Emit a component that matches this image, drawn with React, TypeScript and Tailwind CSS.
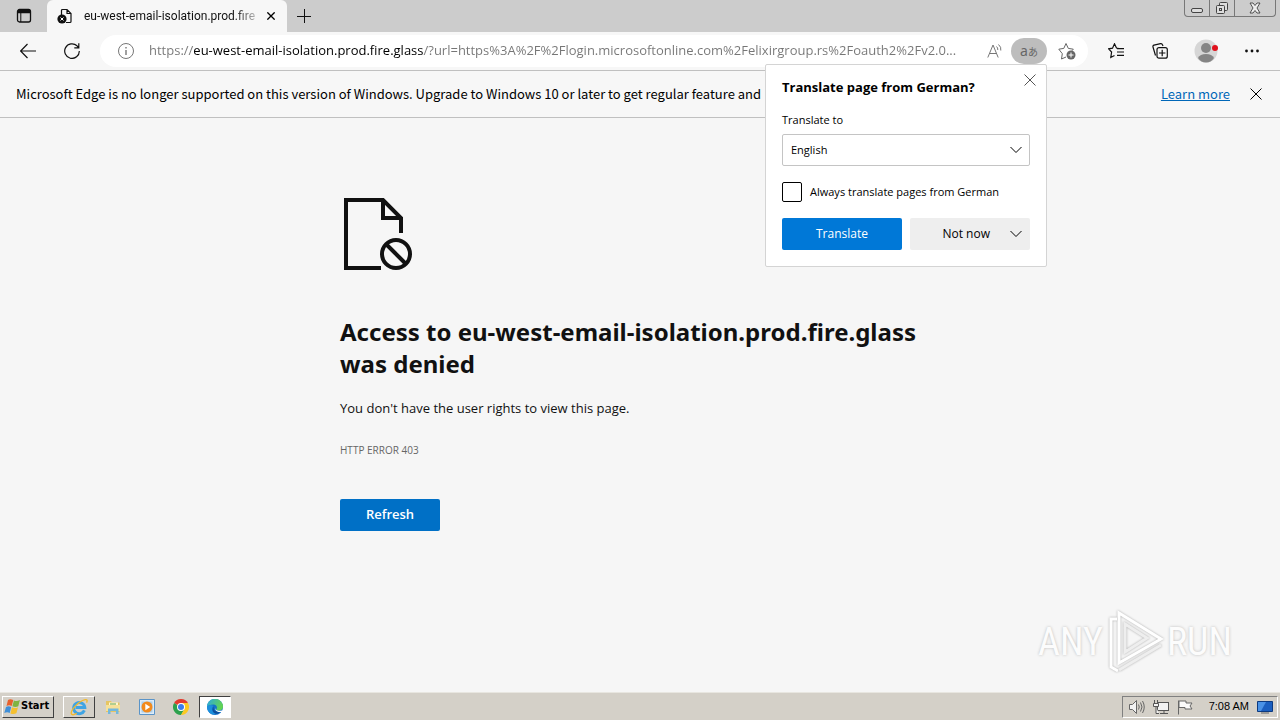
import { ReactNode, useState } from 'react';

type IconProps = { className?: string };

type IconButtonProps = {
  label: string;
  className?: string;
  children: ReactNode;
};

const IconButton = ({ label, className = '', children }: IconButtonProps) => (
  <button
    type="button"
    aria-label={label}
    className={`flex shrink-0 items-center justify-center ${className}`}
  >
    {children}
  </button>
);

const CloseIcon = ({ className = 'size-3' }: IconProps) => (
  <svg className={className} viewBox="0 0 12 12" fill="none" stroke="currentColor">
    <path d="M.5.5l11 11M11.5.5l-11 11" />
  </svg>
);

const ChevronIcon = ({ className = '' }: IconProps) => (
  <svg className={className} viewBox="0 0 12 8" fill="none" stroke="currentColor">
    <path d="M.5 1l5.500 5.500L11.500 1" />
  </svg>
);

const StartFlag = () => (
  <svg className="h-4 w-4" viewBox="0 0 16 16">
    <path d="M4 1c1.500-1 3-1 5.300 0L7.700 7c-2-1-3.700-.7-5.200 0z" fill="#e8612c" />
    <path d="M9.900 1.400c2 .9 3.700.8 6-.3L14.300 7.200c-2 1.100-3.900 1-5.900.1z" fill="#7fb441" />
    <path d="M2 8c1.600-.8 3.200-.9 5.200 0L5.700 14c-2-1-3.700-.7-5.400.1z" fill="#3f8fd8" />
    <path d="M8 8.300c2 1 3.900 1 6-.1L12.400 14.300c-2 1.100-3.900 1-6 .1z" fill="#f5c02f" />
  </svg>
);

const ExplorerEIcon = () => (
  <svg className="size-[18px]" viewBox="0 0 16 16" fill="none">
    <path d="M12.800 11A5 5 0 1 1 13.200 8.500H5" stroke="#3fa4e4" strokeWidth="2.600" />
    <path d="M1.500 14.500C-.5 12 7 3 13.500 1.500c2-.4 2 1 1.200 2.600M1.500 14.500c1 .8 3 0 4.500-1" stroke="#f2b92c" strokeWidth="1.200" />
  </svg>
);

const FolderIcon = () => (
  <svg className="size-4" viewBox="0 0 16 16">
    <path d="M1 2h5l1 1.500h7.500V13H1z" fill="#e6c562" />
    <path d="M4 3.500h9v3H4z" fill="#fff6d0" />
    <path d="M5 4.500h6v1H5z" fill="#62a64e" />
    <path d="M1 6h14v6H1z" fill="#f6e199" />
    <path d="M3 9.500h10.500V15H11v-3H5.500v3H3z" fill="#74b8dc" />
  </svg>
);

const MediaIcon = () => (
  <svg className="size-4" viewBox="0 0 16 16">
    <path d="M.5.500h15v15H.500z" fill="#dcebf8" stroke="#5a94c8" />
    <path d="M2.500 2.500h11v11h-11z" fill="#a9cdea" />
    <circle cx="8" cy="8" r="5.500" fill="#f28a1c" />
    <path d="M6.300 4.800L11.200 8l-4.900 3.200z" fill="#fff" />
  </svg>
);

const ChromeIcon = () => (
  <svg className="size-4" viewBox="0 0 16 16">
    <path d="M8 8L1.070 4A8 8 0 0 1 14.930 4z" fill="#e33b2e" />
    <path d="M8 8h-.5L1.070 4A8 8 0 0 0 8 16l3.500-6z" fill="#2da14d" />
    <path d="M8 8V4h6.930A8 8 0 0 1 8 16l3.460-6z" fill="#fcc921" />
    <circle cx="8" cy="8" r="4" fill="#fff" />
    <circle cx="8" cy="8" r="3" fill="#3b7ded" />
  </svg>
);

const EdgeIcon = () => (
  <svg className="size-4" viewBox="0 0 16 16">
    <defs>
      <linearGradient id="edge-top" x1="0" y1="0" x2="1" y2=".3">
        <stop offset="0" stopColor="#2aa8e2" />
        <stop offset="1" stopColor="#62d453" />
      </linearGradient>
    </defs>
    <circle cx="8" cy="8" r="8" fill="#1271c9" />
    <path d="M0 8A8 8 0 0 1 16 7.500c0 3-2.300 4-4.300 4-1.800 0-2.700-.8-2.200-1.500 1.200-1.800 0-4.500-3-4.500C3.500 5.500.500 6.500 0 8z" fill="url(#edge-top)" />
    <path d="M6.500 7C4 8.500 4.300 13 9 14.800 5.500 17 0 13.500 0 8c1-2 4-3 6.500-1z" fill="#1c8fdc" />
    <path d="M7 7.500c-1.500 3 1 6 6.500 5-1.500 2-3 2.500-4.500 2.300C5 13.500 4.800 9.500 7 7.500z" fill="#0d4f9c" />
    <path d="M8.500 8.500c-.6 2 1.700 4 5.800 2.900l1.700.6V13l-2 0C10.500 13.500 7.500 11.500 8.500 8.500z" fill="#fff" />
  </svg>
);

const TabStrip = () => (
  <div className="flex h-8 items-start bg-[#cccccc]">
    <IconButton label="Tab actions" className="h-8 w-[47px] rounded-br-md">
      <svg className="size-4" viewBox="0 0 16 16" fill="none" stroke="#111">
        <rect x="1.500" y="1.500" width="13" height="12.500" rx="2" strokeWidth="1.300" />
        <path d="M2 3.500h12" strokeWidth="3.500" />
        <path d="M4.800 4v10" />
      </svg>
    </IconButton>
    <div className="flex h-8 w-60 items-center rounded-t-md bg-[#f7f7f7] pl-2.5">
      <svg className="mr-[11px] size-4 shrink-0" viewBox="0 0 16 16" fill="none" stroke="#111">
        <path d="M4.500 7V2.500q0-1 1-1H10L14 5.500V13.500q0 1-1 1H9M10 1.500V5.500h4" strokeWidth="1.200" />
        <circle cx="5" cy="11" r="4.600" fill="#111" stroke="none" />
        <path d="M3.500 9.500l3 3M6.500 9.500l-3 3" stroke="#fff" />
      </svg>
      <span className="w-[175px] whitespace-nowrap bg-[linear-gradient(to_right,#111_150px,#cccccc_174px)] bg-clip-text font-['Roboto',sans-serif] text-xs text-transparent">
        eu-west-email-isolation.prod.fire
      </span>
      <IconButton label="Close tab" className="size-6">
        <CloseIcon className="size-2 stroke-2" />
      </IconButton>
    </div>
    <IconButton label="New tab" className="h-8 w-[34px]">
      <svg className="size-4" viewBox="0 0 16 16" stroke="#111">
        <path d="M1 8.500h14M8.500 1v14" />
      </svg>
    </IconButton>
    <div className="mr-1 ml-auto flex h-[17px] rounded-b border border-t-0 border-[#777] text-[#444]">
      <IconButton label="Minimize" className="w-[25px] border-r border-[#777]">
        <svg className="h-3 w-3" viewBox="0 0 12 12" fill="#ddd" stroke="currentColor">
          <rect x=".5" y="6.500" width="11" height="4" rx="1.500" />
        </svg>
      </IconButton>
      <IconButton label="Restore" className="w-[25px] border-r border-[#777]">
        <svg className="size-3" viewBox="0 0 12 12" fill="#ddd" stroke="currentColor">
          <rect x="3.500" y=".5" width="8" height="8" rx="1" />
          <rect x=".5" y="3.500" width="8" height="8" rx="1" />
          <rect x="3.500" y="6.500" width="2" height="2" />
        </svg>
      </IconButton>
      <IconButton label="Close window" className="w-10">
        <svg className="h-3 w-3" viewBox="0 0 12 12" fill="#eee" stroke="currentColor">
          <path d="M1 1h3l2 2.500L8 1h3L8 6l3 5H8L6 8.500 4 11H1l3-5z" strokeWidth=".9" />
        </svg>
      </IconButton>
    </div>
  </div>
);

const TranslatePopup = () => {
  const [always, setAlways] = useState(false);

  return (
    <section
      aria-label="Translate page"
      className="absolute top-full right-0 z-10 w-[282px] rounded-xs border border-[#d4d4d4] bg-white px-4 pt-3 pb-4 text-[11px] text-black"
    >
      <IconButton label="Close" className="absolute top-[3px] right-1 size-6 text-[#555]">
        <CloseIcon />
      </IconButton>
      <h2 className="text-[13px] leading-5 font-bold">Translate page from German?</h2>
      <label htmlFor="target" className="mt-[13px] block leading-5">
        Translate to
      </label>
      <div className="relative mt-1">
        <select
          id="target"
          className="h-8 w-full appearance-none rounded-xs border border-[#c4c4c4] bg-white px-2"
        >
          <option>English</option>
        </select>
        <ChevronIcon className="pointer-events-none absolute top-3 right-2 h-2 w-3" />
      </div>
      <div className="mt-4 flex h-5 items-center gap-2">
        <input
          id="always"
          type="checkbox"
          checked={always}
          onChange={(e) => setAlways(e.target.checked)}
          className="size-5 appearance-none rounded-xs border border-black checked:bg-[#0078d7]"
        />
        <label htmlFor="always">Always translate pages from German</label>
      </div>
      <div className="mt-4 grid grid-cols-2 gap-2">
        <button type="button" className="h-8 rounded-xs bg-[#0078d7] text-xs text-white">
          Translate
        </button>
        <button
          type="button"
          className="flex h-8 items-center justify-end gap-5 rounded-xs bg-[#eeeeee] pr-2 text-xs"
        >
          Not now
          <ChevronIcon className="h-2 w-3" />
        </button>
      </div>
    </section>
  );
};

const Toolbar = () => (
  <div className="flex h-[39px] items-center border-b border-[#c0c0c0] bg-[#f7f7f7] pr-3 text-[#111]">
    <IconButton label="Back" className="ml-3 size-8">
      <svg className="size-4" viewBox="0 0 16 16" fill="none" stroke="currentColor" strokeWidth="1.200">
        <path d="M16 8H.8M7.500 1L.6 8l6.900 7" />
      </svg>
    </IconButton>
    <IconButton label="Refresh page" className="ml-3 size-8">
      <svg className="size-4" viewBox="0 0 16 16" fill="none" stroke="currentColor" strokeWidth="1.200">
        <path d="M15.300 8A7.300 7.300 0 1 1 13 2.800L14.500 4.500M14.800.300V4.800H10.300" />
      </svg>
    </IconButton>
    <div className="ml-3 flex h-8 min-w-0 flex-1 items-center rounded-full bg-white pr-[5px]">
      <IconButton label="Site information" className="ml-4 size-5 text-[#777]">
        <svg className="size-4" viewBox="0 0 16 16" fill="none" stroke="currentColor">
          <circle cx="8" cy="8" r="7.500" />
          <path d="M8 7v5M8 4v1.500" strokeWidth="1.400" />
        </svg>
      </IconButton>
      <input
        aria-label="Address"
        readOnly
        value="https://eu-west-email-isolation.prod.fire.glass/?url=https%3A%2F%2Flogin.microsoftonline.com%2Felixirgroup.rs%2Foauth2%2Fv2.0..."
        className="mr-2 ml-[13px] min-w-0 flex-1 bg-[linear-gradient(to_right,#767676_44px,#000_44px,#000_274px,#767676_274px)] bg-clip-text text-[13px] text-transparent outline-none"
      />
      <IconButton label="Read aloud" className="size-8 text-[#777]">
        <svg className="size-4" viewBox="0 0 16 16" fill="none" stroke="currentColor">
          <path d="M.8 14.500L6 2l5.200 12.500M2.600 10.500h6.800M9.500 3.500q1.500 1.200 1.300 3.500M11.500 1.500q3 2.500 2.300 6" />
        </svg>
      </IconButton>
      <div className="relative">
        <IconButton label="Translate this page" className="h-[26px] w-9 rounded-full bg-[#bdbdbd] text-[#666]">
          <span className="font-['Noto_Sans','Noto_Sans_CJK_JP',sans-serif] text-[10px] leading-4">
            <span className="text-sm leading-4">a</span>あ
          </span>
        </IconButton>
        <TranslatePopup />
      </div>
      <IconButton label="Add to favorites" className="ml-1 size-8 text-[#666]">
        <svg className="size-[18px]" viewBox="0 0 18 18" fill="none" stroke="currentColor">
          <path d="M8 15l-4.500 2 .8-5.300L.800 7.200l5-.8L8 1.500l2.300 4.900 5 .8-1.300 1.500" />
          <circle cx="13" cy="13" r="4.500" fill="currentColor" stroke="none" />
          <path d="M10.500 13h5M13 10.500v5" stroke="#fff" />
        </svg>
      </IconButton>
    </div>
    <IconButton label="Favorites" className="ml-3 size-8">
      <svg className="size-4" viewBox="0 0 16 16" fill="none" stroke="currentColor" strokeWidth="1.200">
        <path d="M11 5.500L8.500 5 6.500.800 4.500 5.200.600 5.800l3 3.200-.8 5.500L6.500 12.500M9 5.600h7M9 9h7M9 12.400h7" />
      </svg>
    </IconButton>
    <IconButton label="Collections" className="ml-3 size-8">
      <svg className="size-4" viewBox="0 0 16 16" fill="none" stroke="currentColor" strokeWidth="1.200">
        <path d="M3.500 12.500L1 4Q.600 2.600 2 2.200L8.500.700Q10 .400 10.500 1.800L11 3" />
        <rect x="5" y="4.600" width="10.300" height="10.600" rx="2" />
        <path d="M10.200 6.800v6.400M7 10h6.400" />
      </svg>
    </IconButton>
    <IconButton label="Profile" className="ml-3 size-9">
      <svg className="size-6" viewBox="0 0 24 24">
        <circle cx="12" cy="12" r="11.500" fill="#d6d6d6" />
        <circle cx="12" cy="9" r="5" fill="#858585" />
        <path d="M4 19q2-4 8-4t8 4q-3 4.500-8 4.500T4 19z" fill="#858585" />
        <circle cx="21" cy="9" r="3" fill="#e0101c" />
      </svg>
    </IconButton>
    <IconButton label="Settings and more" className="ml-3 size-8">
      <svg className="size-4" viewBox="0 0 16 16" fill="currentColor">
        <circle cx="2.500" cy="8" r="1.400" />
        <circle cx="8" cy="8" r="1.400" />
        <circle cx="13.500" cy="8" r="1.400" />
      </svg>
    </IconButton>
  </div>
);

const SupportBanner = () => (
  <div className="flex h-[47px] items-center border-b border-[#c0c0c0] bg-[#f7f7f7] pr-3.5 pl-4 font-['Noto_Sans_CJK_SC',sans-serif] text-[13px] text-black">
    <p className="min-w-0 flex-1 whitespace-nowrap">
      Microsoft Edge is no longer supported on this version of Windows. Upgrade to Windows 10 or later to get regular feature and
    </p>
    <a href="#" className="text-[#0067b8] underline">
      Learn more
    </a>
    <IconButton label="Dismiss" className="ml-4 size-5">
      <CloseIcon />
    </IconButton>
  </div>
);

const ErrorPage = () => (
  <main className="relative flex-1 bg-[#f6f6f6] px-6 pt-20 text-[#111]">
    <div className="mx-auto max-w-[600px]">
      <svg className="size-[72px]" viewBox="0 0 72 72" fill="none" stroke="#111" strokeWidth="4">
        <path d="M41 70H6V2H43L61 20V35M43 2V20H61" />
        <circle cx="56" cy="56" r="14" />
        <path d="M46 46l20 20" />
      </svg>
      <h1 className="mt-[46px] font-['Noto_Sans',sans-serif] text-2xl leading-8 font-bold">
        Access to eu-west-email-isolation.prod.fire.glass was denied
      </h1>
      <p className="mt-4 text-[13px] leading-6">You don&apos;t have the user rights to view this page.</p>
      <p className="mt-5 text-[10px] leading-5 text-[#666]">HTTP ERROR 403</p>
      <button
        type="button"
        className="mt-[39px] h-8 w-[100px] rounded-xs bg-[#0070c6] text-[13px] font-semibold text-white"
      >
        Refresh
      </button>
    </div>
    <div className="pointer-events-none absolute right-12 bottom-[18px] flex items-center gap-0.5 font-['Roboto_Condensed','Liberation_Sans',sans-serif] text-[38px] text-[#fcfcfc] [text-shadow:0_0_3px_#bbb]">
      <span>ANY</span>
      <svg className="h-16 w-15 drop-shadow-[0_0_1px_#aaa]" viewBox="0 0 60 64" fill="none" stroke="#fff" strokeWidth="3">
        <path d="M12 9H6V57L13 61M14 3v50L56 29z" />
        <path d="M20 14v28L42 28z" stroke="#eee" />
        <path d="M14 60L56 35" stroke="#eee" />
      </svg>
      <span>RUN</span>
    </div>
  </main>
);

const Taskbar = () => (
  <footer className="flex h-7 items-center border-t border-[#e8e6e0] bg-[#d4d0c8] pl-0.5 font-['Liberation_Sans',sans-serif] text-[11px] text-black">
    <button
      type="button"
      className="flex h-[22px] w-[52px] items-center gap-px border border-t-white border-r-[#404040] border-b-[#404040] border-l-white pl-px font-['DejaVu_Sans_Condensed','DejaVu_Sans',sans-serif] font-bold"
    >
      <StartFlag />
      Start
    </button>
    <IconButton label="Internet Explorer" className="ml-[9px] h-[22px] w-8 border border-t-white border-r-[#404040] border-b-[#404040] border-l-white">
      <ExplorerEIcon />
    </IconButton>
    <IconButton label="Windows Explorer" className="ml-0.5 h-[22px] w-8">
      <FolderIcon />
    </IconButton>
    <IconButton label="Media Player" className="ml-0.5 h-[22px] w-8">
      <MediaIcon />
    </IconButton>
    <IconButton label="Chrome" className="ml-0.5 h-[22px] w-8">
      <ChromeIcon />
    </IconButton>
    <IconButton label="Edge" className="ml-0.5 h-[22px] w-8 border border-t-[#404040] border-r-white border-b-white border-l-[#404040] bg-white">
      <EdgeIcon />
    </IconButton>
    <div className="mr-0.5 ml-auto flex h-[22px] items-center border border-t-[#808080] border-r-white border-b-white border-l-[#808080] pl-1.5">
      <svg className="mr-2 size-4" viewBox="0 0 16 16" fill="#f2f2f2" stroke="#666">
        <path d="M.5 5.500h3l4-4v13l-4-4h-3z" />
        <path d="M9.500 5.500q1.500 2.500 0 5M11.500 3.500q3 4.500 0 9M13.500 2q3.500 6 0 12" fill="none" />
      </svg>
      <svg className="mr-2 size-4" viewBox="0 0 16 16" fill="#f2f2f2" stroke="#555">
        <rect x="4.500" y="3.500" width="11" height="8" />
        <path d="M7 14.500h8M11 12v2.500M1.500 1v3M4.500 1v3M.500 4.500h5v3h-5zM3 8v6.500h3" />
      </svg>
      <svg className="mr-4 size-4" viewBox="0 0 16 16" fill="#fafafa" stroke="#666">
        <path d="M1.500 1.500v14M2 2h7v2h6l-2 3 2 3H8V8.500H2z" />
      </svg>
      <time className="mr-2">7:08 AM</time>
      <svg className="mr-1 size-4" viewBox="0 0 16 16">
        <path d="M.5 2.500h15v10H.5z" fill="#1b5fc0" stroke="#0c3a80" />
        <path d="M1 3h8L4 12H1z" fill="#4a92e6" />
        <path d="M4 14h8" stroke="#666" />
      </svg>
    </div>
  </footer>
);

const App = () => (
  <div className="flex min-h-screen flex-col bg-[#f6f6f6] font-['Open_Sans',sans-serif]">
    <TabStrip />
    <Toolbar />
    <SupportBanner />
    <ErrorPage />
    <Taskbar />
  </div>
);

export default App;
